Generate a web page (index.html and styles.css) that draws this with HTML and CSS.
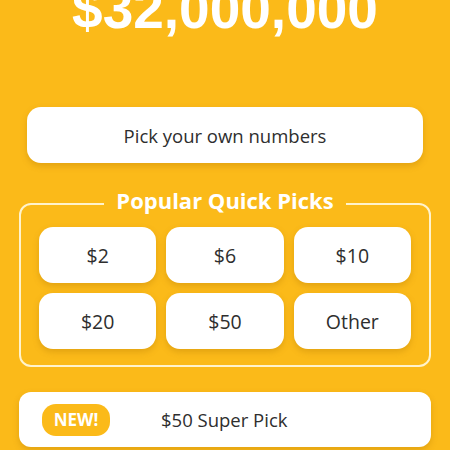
FILE: index.html
```html
<!DOCTYPE html>
<html lang="en">

<head>
    <meta charset="UTF-8">
    <meta name="viewport" content="width=device-width, initial-scale=1.0">
    <title>Quick Picks</title>
    <link rel="stylesheet" href="styles.css">
</head>

<body>

    <div class="Principal">
        <h1 class="jackpot">$32,000,000</h1>

        <button type="button" class="pick-own">Pick your own numbers</button>

        <fieldset class="quick-picks">
            <legend>Popular Quick Picks</legend>
            <div class="grid">
                <button type="button" class="amount">$2</button>
                <button type="button" class="amount">$6</button>
                <button type="button" class="amount">$10</button>
                <button type="button" class="amount">$20</button>
                <button type="button" class="amount">$50</button>
                <button type="button" class="amount">Other</button>
            </div>
        </fieldset>

        <button type="button" class="super-pick">
            <span class="badge">NEW!</span>
            <span class="super-label">$50 Super Pick</span>
        </button>
    </div>

</body>

</html>
```

FILE: styles.css
```css
body {
    font-family: 'Open Sans', 'Liberation Sans', sans-serif;
    background-color: #fbba19;
    color: #2e2e2e;
    margin: 0;
    overflow: hidden;
    height: 450px;
}


.Principal {
    display: flex;
    flex-direction: column;
}


.jackpot {
    font-family: 'Liberation Sans', Arial, sans-serif;
    font-weight: bold;
    font-size: 55px;
    line-height: 55px;
    color: #fff;
    text-align: center;
    margin: -18px 0 0;
}


button {
    font-family: inherit;
    color: #2e2e2e;
    background-color: #fff;
    border: none;
    cursor: pointer;
    box-shadow: 0 3px 6px rgba(170, 110, 0, 0.3);
}


.pick-own {
    margin: 70px 27px 0;
    height: 56px;
    border-radius: 14px;
    font-size: 18.5px;
}


.quick-picks {
    margin: 24px 19px 0;
    padding: 6px 18px 16px;
    border: 2px solid #fff3cc;
    border-radius: 12px;
}


.quick-picks legend {
    margin: 0 auto;
    padding: 0 12px 8px;
    font-size: 22px;
    line-height: 26px;
    font-weight: bold;
    color: #fff;
}


.grid {
    display: grid;
    grid-template-columns: repeat(3, 1fr);
    gap: 10px;
}


.amount {
    height: 56px;
    border-radius: 14px;
    font-size: 19.5px;
}


.super-pick {
    margin: 25px 19px 0;
    height: 55px;
    border-radius: 12px;
    display: flex;
    align-items: center;
    padding: 0 23px;
    font-size: 18.5px;
}


.badge {
    background-color: #fbba19;
    color: #fff;
    font-weight: bold;
    font-size: 17px;
    width: 68px;
    height: 32px;
    line-height: 32px;
    border-radius: 14px;
    text-align: center;
}


.super-label {
    margin-left: 51px;
}
```
